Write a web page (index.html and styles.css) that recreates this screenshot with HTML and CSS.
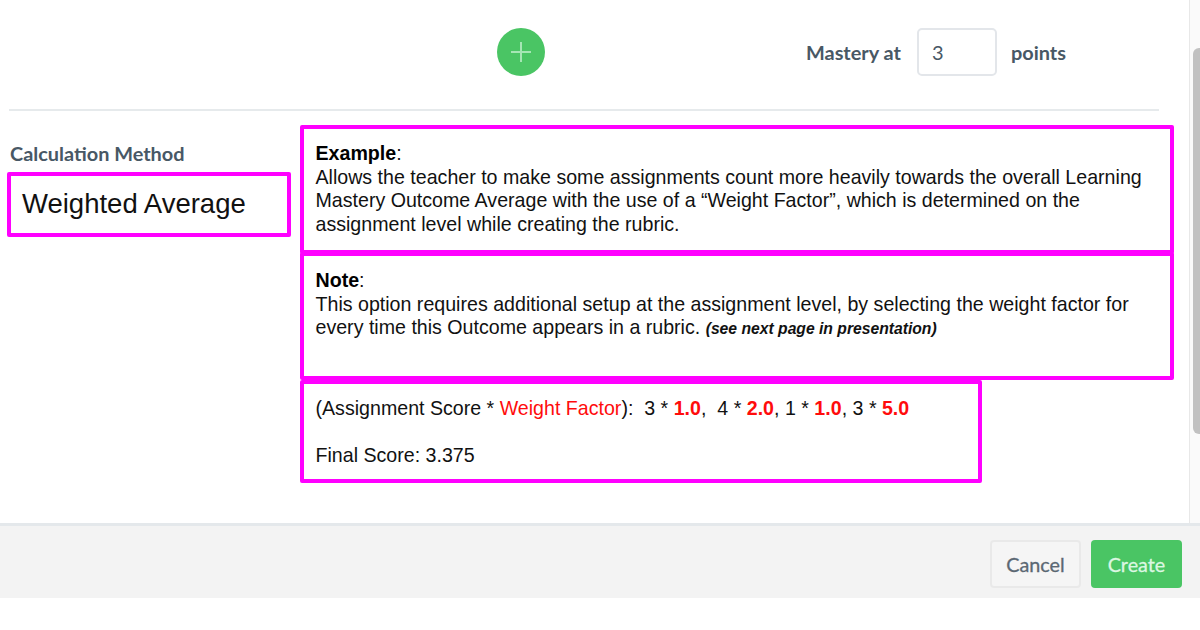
FILE: index.html
```html
<!DOCTYPE html>
<html lang="en">
<head>
    <meta charset="UTF-8">
    <meta name="viewport" content="width=device-width, initial-scale=1.0">
    <title>Calculation Method</title>
    <link rel="stylesheet" href="styles.css">
</head>
<body>

  <div class="window">
    <div class="content">

      <div class="ratings">
        <button class="add">
          <svg width="22" height="22" viewBox="0 0 22 22"><path d="M11 1v20M1 11h20" stroke="#a5e6b4" stroke-width="2" fill="none"/></svg>
        </button>
        <div class="mastery">
          <label class="at" for="points">Mastery at</label>
          <input id="points" type="text" value="3">
          <span class="points">points</span>
        </div>
      </div>

      <div class="method">
        <div class="left">
          <h3>Calculation Method</h3>
          <div class="box name">Weighted Average</div>
        </div>

        <div class="right">
          <div class="box example">
            <p><b>Example</b>:</p>
            <p>Allows the teacher to make some assignments count more heavily towards the overall Learning<br>
            Mastery Outcome Average with the use of a “Weight Factor”, which is determined on the<br>
            assignment level while creating the rubric.</p>
          </div>
          <div class="box note">
            <p><b>Note</b>:</p>
            <p>This option requires additional setup at the assignment level, by selecting the weight factor for<br>
            every time this Outcome appears in a rubric. <i>(see next page in presentation)</i></p>
          </div>
          <div class="box score">
            <p>(Assignment Score * <span class="red">Weight Factor</span>):&nbsp; 3 * <b class="red">1.0</b>,&nbsp; 4 * <b class="red">2.0</b>, 1 * <b class="red">1.0</b>, 3 * <b class="red">5.0</b></p>
            <br>
            <p>Final Score: 3.375</p>
          </div>
        </div>
      </div>

    </div>
    <div class="scrollbar"><div class="thumb"></div></div>
  </div>

  <footer>
    <button class="btn cancel">Cancel</button>
    <button class="btn create">Create</button>
  </footer>

</body>
</html>
```
FILE: styles.css
```css
* {
  margin: 0;
  padding: 0;
  box-sizing: border-box;
}
body {
  height: 630px;
  background-color: #fff;
  font-family: Lato, sans-serif;
  color: #485865;
  overflow: hidden;
}
.window {
  display: flex;
  height: 523px;
}
.content {
  width: 1189px;
  padding-left: 7px;
}

/* top row */
.ratings {
  display: flex;
  width: 1150px;
  height: 111px;
  margin-left: 2px;
  padding-top: 27px;
  padding-left: 488px;
  border-bottom: 2px solid #e6eaec;
}
.add {
  display: flex;
  align-items: center;
  justify-content: center;
  width: 48px;
  height: 48px;
  margin-top: 0.6px;
  border: none;
  border-radius: 50%;
  background-color: #4ac564;
}
.mastery {
  display: flex;
  align-items: center;
  height: 50px;
  margin-left: 261px;
  font-size: 19.9px;
  font-weight: bold;
}
.at {
  width: 111px;
}
.mastery input {
  width: 80px;
  height: 48px;
  padding-left: 13px;
  border: 2px solid #e3e6ea;
  border-radius: 5px;
  font-family: Lato, sans-serif;
  font-size: 20px;
  color: #485865;
}
.points {
  margin-left: 14px;
}

/* method and explanation */
.method {
  display: flex;
}
.left {
  width: 293px;
}
.left h3 {
  height: 61px;
  padding: 30px 0 0 3px;
  font-size: 19.9px;
  line-height: 24px;
}
.right {
  padding-top: 14px;
}
.box {
  border: 4px solid #ff00ff;
  border-radius: 2px;
  font-family: "Liberation Sans", Arial, sans-serif;
  color: #111;
  white-space: nowrap;
}
.name {
  width: 284px;
  height: 65px;
  padding-left: 11px;
  font-size: 27.5px;
  line-height: 56px;
}
.right .box {
  width: 874px;
  padding-left: 11.5px;
  font-size: 19.62px;
  line-height: 23.7px;
}
.example {
  height: 129px;
  padding-top: 13px;
}
.note {
  height: 128px;
  margin-top: -2px;
  padding-top: 13px;
}
.note i {
  font-size: 15.7px;
  font-weight: bold;
}
.right .score {
  width: 682px;
  height: 103px;
  padding-top: 13px;
}
.box b {
  color: #000;
}
.box .red {
  color: #ff0c0c;
}

.scrollbar {
  width: 11px;
  padding: 48px 0 0 3px;
  border-left: 1px solid #e8e8e8;
  background-color: #fafafa;
}
.thumb {
  width: 14px;
  height: 386px;
  border-radius: 6px;
  background-color: #c1c1c1;
}

footer {
  display: flex;
  justify-content: flex-end;
  height: 75px;
  padding: 14px 18px 0 0;
  border-top: 3px solid #e4e8eb;
  background-color: #f3f3f3;
}
.btn {
  height: 48px;
  border-radius: 4px;
  font-family: Lato, sans-serif;
  font-size: 19.8px;
  -webkit-text-stroke: 0.3px;
}
.cancel {
  width: 91px;
  margin-right: 10px;
  border: 2px solid #e9e9e9;
  background-color: #f5f5f5;
  color: #5b6873;
}
.create {
  width: 91px;
  border: none;
  background-color: #4ac564;
  color: #dcf7e2;
}
```
